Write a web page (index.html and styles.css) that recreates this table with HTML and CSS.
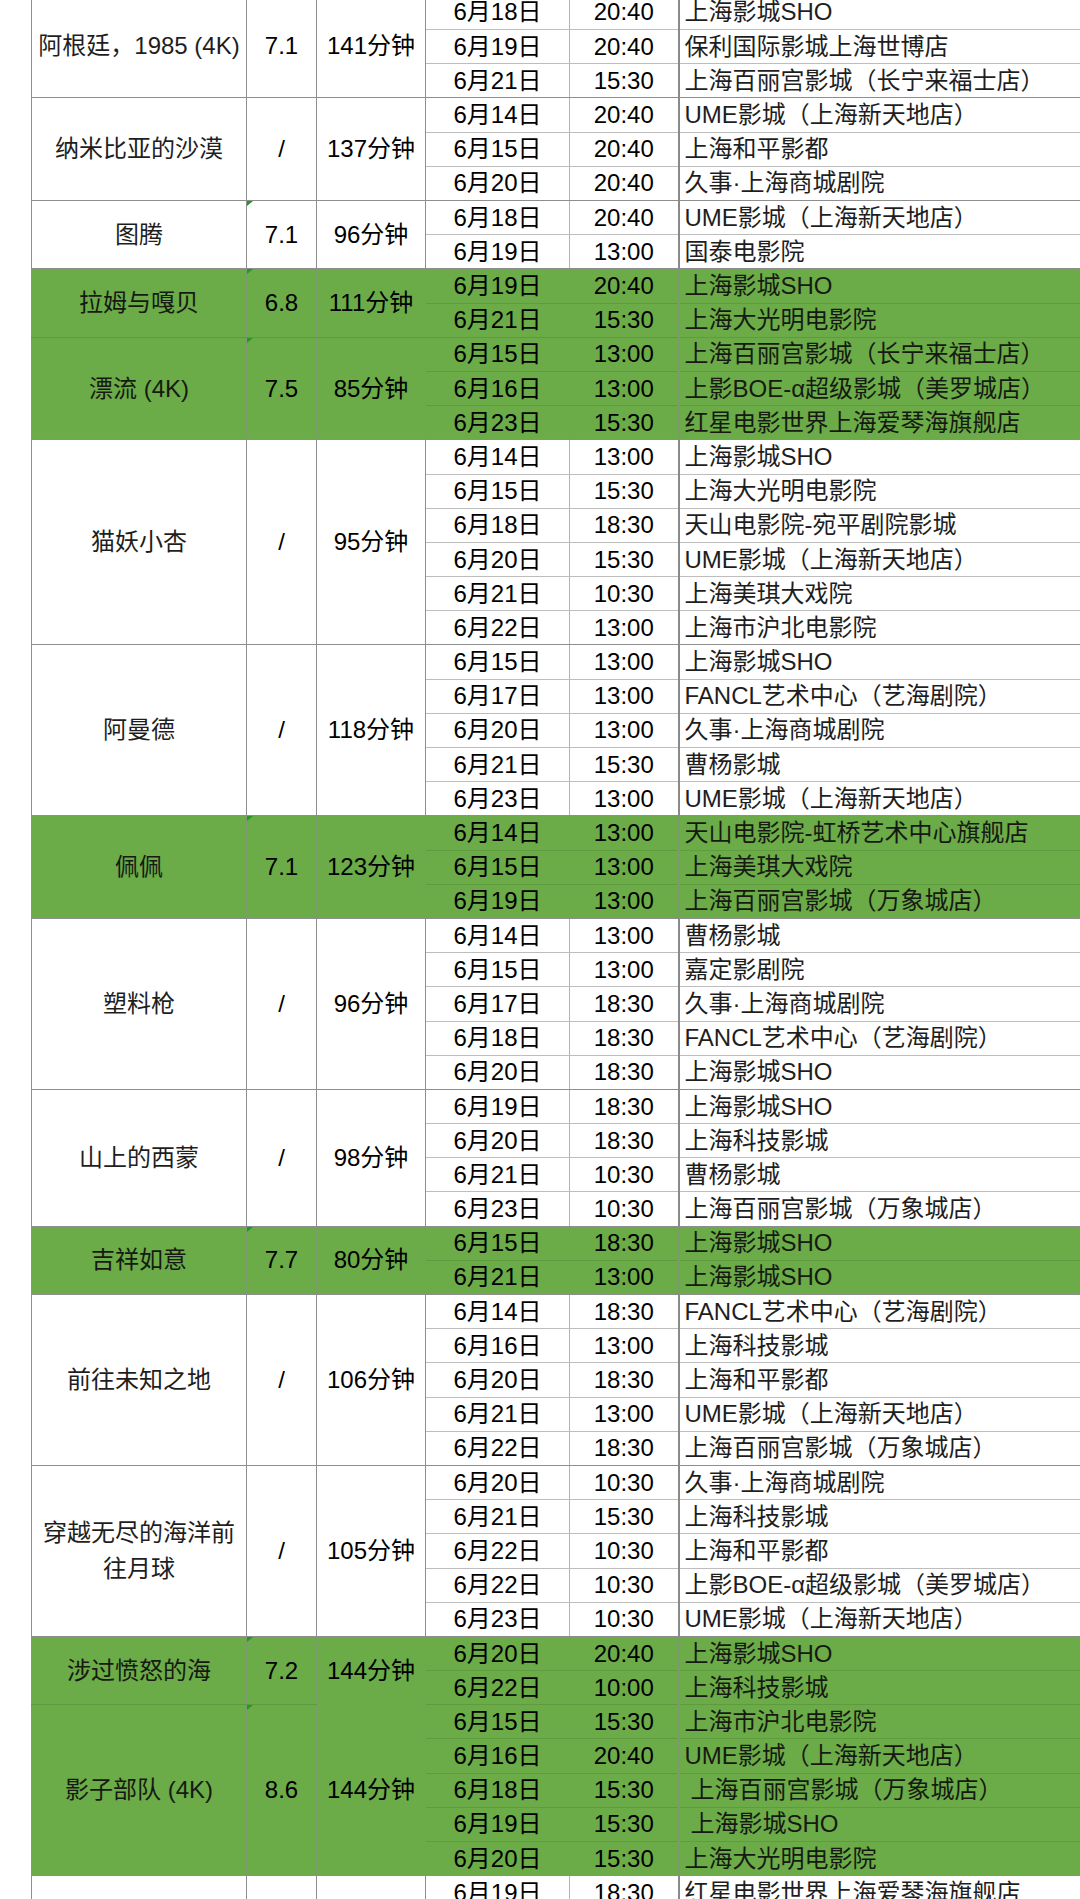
FILE: index.html
```html
<!DOCTYPE html>
<html lang="zh-CN">
<head>
<meta charset="utf-8">
<title>影展排片表</title>
<link rel="stylesheet" href="styles.css">
</head>
<body>
<div class="sheet">
<table class="grid">
<colgroup>
<col class="c-title"><col class="c-rate"><col class="c-dur"><col class="c-date"><col class="c-time"><col class="c-venue">
</colgroup>

<tbody class="grp">
<tr><td rowspan="3" class="title">阿根廷，1985 (4K)</td><td rowspan="3" class="rate tri">7.1</td><td rowspan="3" class="dur">141分钟</td><td class="date">6月18日</td><td class="time">20:40</td><td class="venue">上海影城SHO</td></tr>
<tr><td class="date">6月19日</td><td class="time">20:40</td><td class="venue">保利国际影城上海世博店</td></tr>
<tr><td class="date">6月21日</td><td class="time">15:30</td><td class="venue">上海百丽宫影城（长宁来福士店）</td></tr>
</tbody>

<tbody class="grp">
<tr><td rowspan="3" class="title">纳米比亚的沙漠</td><td rowspan="3" class="rate">/</td><td rowspan="3" class="dur">137分钟</td><td class="date">6月14日</td><td class="time">20:40</td><td class="venue">UME影城（上海新天地店）</td></tr>
<tr><td class="date">6月15日</td><td class="time">20:40</td><td class="venue">上海和平影都</td></tr>
<tr><td class="date">6月20日</td><td class="time">20:40</td><td class="venue">久事·上海商城剧院</td></tr>
</tbody>

<tbody class="grp">
<tr><td rowspan="2" class="title">图腾</td><td rowspan="2" class="rate tri">7.1</td><td rowspan="2" class="dur">96分钟</td><td class="date">6月18日</td><td class="time">20:40</td><td class="venue">UME影城（上海新天地店）</td></tr>
<tr><td class="date">6月19日</td><td class="time">13:00</td><td class="venue">国泰电影院</td></tr>
</tbody>

<tbody class="grp g">
<tr><td rowspan="2" class="title">拉姆与嘎贝</td><td rowspan="2" class="rate tri">6.8</td><td rowspan="2" class="dur">111分钟</td><td class="date">6月19日</td><td class="time">20:40</td><td class="venue">上海影城SHO</td></tr>
<tr><td class="date">6月21日</td><td class="time">15:30</td><td class="venue">上海大光明电影院</td></tr>
</tbody>

<tbody class="grp g gend">
<tr><td rowspan="3" class="title">漂流 (4K)</td><td rowspan="3" class="rate tri">7.5</td><td rowspan="3" class="dur">85分钟</td><td class="date">6月15日</td><td class="time">13:00</td><td class="venue">上海百丽宫影城（长宁来福士店）</td></tr>
<tr><td class="date">6月16日</td><td class="time">13:00</td><td class="venue">上影BOE-α超级影城（美罗城店）</td></tr>
<tr><td class="date">6月23日</td><td class="time">15:30</td><td class="venue">红星电影世界上海爱琴海旗舰店</td></tr>
</tbody>

<tbody class="grp">
<tr><td rowspan="6" class="title">猫妖小杏</td><td rowspan="6" class="rate">/</td><td rowspan="6" class="dur">95分钟</td><td class="date">6月14日</td><td class="time">13:00</td><td class="venue">上海影城SHO</td></tr>
<tr><td class="date">6月15日</td><td class="time">15:30</td><td class="venue">上海大光明电影院</td></tr>
<tr><td class="date">6月18日</td><td class="time">18:30</td><td class="venue">天山电影院-宛平剧院影城</td></tr>
<tr><td class="date">6月20日</td><td class="time">15:30</td><td class="venue">UME影城（上海新天地店）</td></tr>
<tr><td class="date">6月21日</td><td class="time">10:30</td><td class="venue">上海美琪大戏院</td></tr>
<tr><td class="date">6月22日</td><td class="time">13:00</td><td class="venue">上海市沪北电影院</td></tr>
</tbody>

<tbody class="grp">
<tr><td rowspan="5" class="title">阿曼德</td><td rowspan="5" class="rate">/</td><td rowspan="5" class="dur">118分钟</td><td class="date">6月15日</td><td class="time">13:00</td><td class="venue">上海影城SHO</td></tr>
<tr><td class="date">6月17日</td><td class="time">13:00</td><td class="venue">FANCL艺术中心（艺海剧院）</td></tr>
<tr><td class="date">6月20日</td><td class="time">13:00</td><td class="venue">久事·上海商城剧院</td></tr>
<tr><td class="date">6月21日</td><td class="time">15:30</td><td class="venue">曹杨影城</td></tr>
<tr><td class="date">6月23日</td><td class="time">13:00</td><td class="venue">UME影城（上海新天地店）</td></tr>
</tbody>

<tbody class="grp g gend">
<tr><td rowspan="3" class="title">佩佩</td><td rowspan="3" class="rate tri">7.1</td><td rowspan="3" class="dur">123分钟</td><td class="date">6月14日</td><td class="time">13:00</td><td class="venue">天山电影院-虹桥艺术中心旗舰店</td></tr>
<tr><td class="date">6月15日</td><td class="time">13:00</td><td class="venue">上海美琪大戏院</td></tr>
<tr><td class="date">6月19日</td><td class="time">13:00</td><td class="venue">上海百丽宫影城（万象城店）</td></tr>
</tbody>

<tbody class="grp">
<tr><td rowspan="5" class="title">塑料枪</td><td rowspan="5" class="rate">/</td><td rowspan="5" class="dur">96分钟</td><td class="date">6月14日</td><td class="time">13:00</td><td class="venue">曹杨影城</td></tr>
<tr><td class="date">6月15日</td><td class="time">13:00</td><td class="venue">嘉定影剧院</td></tr>
<tr><td class="date">6月17日</td><td class="time">18:30</td><td class="venue">久事·上海商城剧院</td></tr>
<tr><td class="date">6月18日</td><td class="time">18:30</td><td class="venue">FANCL艺术中心（艺海剧院）</td></tr>
<tr><td class="date">6月20日</td><td class="time">18:30</td><td class="venue">上海影城SHO</td></tr>
</tbody>

<tbody class="grp">
<tr><td rowspan="4" class="title">山上的西蒙</td><td rowspan="4" class="rate">/</td><td rowspan="4" class="dur">98分钟</td><td class="date">6月19日</td><td class="time">18:30</td><td class="venue">上海影城SHO</td></tr>
<tr><td class="date">6月20日</td><td class="time">18:30</td><td class="venue">上海科技影城</td></tr>
<tr><td class="date">6月21日</td><td class="time">10:30</td><td class="venue">曹杨影城</td></tr>
<tr><td class="date">6月23日</td><td class="time">10:30</td><td class="venue">上海百丽宫影城（万象城店）</td></tr>
</tbody>

<tbody class="grp g gend">
<tr><td rowspan="2" class="title">吉祥如意</td><td rowspan="2" class="rate tri">7.7</td><td rowspan="2" class="dur">80分钟</td><td class="date">6月15日</td><td class="time">18:30</td><td class="venue">上海影城SHO</td></tr>
<tr><td class="date">6月21日</td><td class="time">13:00</td><td class="venue">上海影城SHO</td></tr>
</tbody>

<tbody class="grp">
<tr><td rowspan="5" class="title">前往未知之地</td><td rowspan="5" class="rate">/</td><td rowspan="5" class="dur">106分钟</td><td class="date">6月14日</td><td class="time">18:30</td><td class="venue">FANCL艺术中心（艺海剧院）</td></tr>
<tr><td class="date">6月16日</td><td class="time">13:00</td><td class="venue">上海科技影城</td></tr>
<tr><td class="date">6月20日</td><td class="time">18:30</td><td class="venue">上海和平影都</td></tr>
<tr><td class="date">6月21日</td><td class="time">13:00</td><td class="venue">UME影城（上海新天地店）</td></tr>
<tr><td class="date">6月22日</td><td class="time">18:30</td><td class="venue">上海百丽宫影城（万象城店）</td></tr>
</tbody>

<tbody class="grp">
<tr><td rowspan="5" class="title">穿越无尽的海洋前往月球</td><td rowspan="5" class="rate">/</td><td rowspan="5" class="dur">105分钟</td><td class="date">6月20日</td><td class="time">10:30</td><td class="venue">久事·上海商城剧院</td></tr>
<tr><td class="date">6月21日</td><td class="time">15:30</td><td class="venue">上海科技影城</td></tr>
<tr><td class="date">6月22日</td><td class="time">10:30</td><td class="venue">上海和平影都</td></tr>
<tr><td class="date">6月22日</td><td class="time">10:30</td><td class="venue">上影BOE-α超级影城（美罗城店）</td></tr>
<tr><td class="date">6月23日</td><td class="time">10:30</td><td class="venue">UME影城（上海新天地店）</td></tr>
</tbody>

<tbody class="grp g">
<tr><td rowspan="2" class="title">涉过愤怒的海</td><td rowspan="2" class="rate tri">7.2</td><td rowspan="2" class="dur open">144分钟</td><td class="date">6月20日</td><td class="time">20:40</td><td class="venue">上海影城SHO</td></tr>
<tr><td class="date">6月22日</td><td class="time">10:00</td><td class="venue">上海科技影城</td></tr>
</tbody>

<tbody class="grp g gend">
<tr><td rowspan="5" class="title">影子部队 (4K)</td><td rowspan="5" class="rate tri">8.6</td><td rowspan="5" class="dur">144分钟</td><td class="date">6月15日</td><td class="time">15:30</td><td class="venue">上海市沪北电影院</td></tr>
<tr><td class="date">6月16日</td><td class="time">20:40</td><td class="venue">UME影城（上海新天地店）</td></tr>
<tr><td class="date">6月18日</td><td class="time">15:30</td><td class="venue ind">上海百丽宫影城（万象城店）</td></tr>
<tr><td class="date">6月19日</td><td class="time">15:30</td><td class="venue ind">上海影城SHO</td></tr>
<tr><td class="date">6月20日</td><td class="time">15:30</td><td class="venue">上海大光明电影院</td></tr>
</tbody>

<tbody class="grp">
<tr><td class="title"></td><td class="rate"></td><td class="dur"></td><td class="date">6月19日</td><td class="time">18:30</td><td class="venue">红星电影世界上海爱琴海旗舰店</td></tr>
</tbody>
</table>
</div>
</body>
</html>
```

FILE: styles.css
```css
* {
  box-sizing: border-box;
}

html,
body {
  margin: 0;
  padding: 0;
  background: #ffffff;
}

body {
  overflow: hidden;
  font-family: "Liberation Sans", "Noto Sans CJK SC", sans-serif;
  font-size: 24px;
  color: #1e1e1e;
}

.sheet {
  padding-left: 31px;
}

.grid {
  border-collapse: collapse;
  table-layout: fixed;
  width: 1069px;
  margin-top: -4.6px;
}

.c-title { width: 215px; }
.c-rate  { width: 70px; }
.c-dur   { width: 109px; }
.c-date  { width: 144px; }
.c-time  { width: 109px; }
.c-venue { width: 422px; }

.grid tr {
  height: 34.19px;
}

.grid td {
  padding: 0 4px;
  border-right: 1px solid #8e8e8e;
  border-bottom: 1px solid #bdbdbd;
  vertical-align: middle;
  white-space: nowrap;
  overflow: hidden;
  line-height: 1.25;
  background: #ffffff;
}

.grid td.title {
  border-left: 1px solid #8e8e8e;
  text-align: center;
  white-space: normal;
  padding: 0 6px;
  line-height: 1.5;
}

.grid td.rate,
.grid td.dur,
.grid td.date,
.grid td.time {
  text-align: center;
  color: #000000;
}

.grid td.date {
  border-right-color: #b4b4b4;
}

.grid td.time {
  border-right: 2px solid #8a8a8a;
}

.grid td.venue {
  padding-left: 5px;
}

.grid td.venue.ind {
  padding-left: 11px;
}

/* group boundaries */
.grid td.title,
.grid td.rate,
.grid td.dur,
.grid tr:last-child td {
  border-bottom-color: #8e8e8e;
}

/* green highlighted groups */
.grp.g td {
  background: #6bab48;
  color: #161a12;
  border-bottom-color: #5f9c40;
  border-right-color: #7c9a6c;
}

.grp.g td.rate,
.grp.g td.dur,
.grp.g td.date,
.grp.g td.time {
  color: #000000;
}

.grp.g td.title {
  border-left-color: #8e8e8e;
}

.grp.g td.title,
.grp.g td.rate,
.grp.g td.dur,
.grp.g tr:last-child td {
  border-bottom-color: #5f9a41;
}

.grp.g td.dur.open {
  border-bottom-color: #6bab48;
}

.grp.g.gend td.title,
.grp.g.gend td.rate,
.grp.g.gend td.dur,
.grp.g.gend tr:last-child td {
  border-bottom-color: #8e8e8e;
}

/* excel "number stored as text" marker */
.grid td.tri {
  position: relative;
}

.grid td.tri::before {
  content: "";
  position: absolute;
  left: 0;
  top: 0;
  border-top: 5px solid #1f9a2a;
  border-right: 6px solid transparent;
}
```
